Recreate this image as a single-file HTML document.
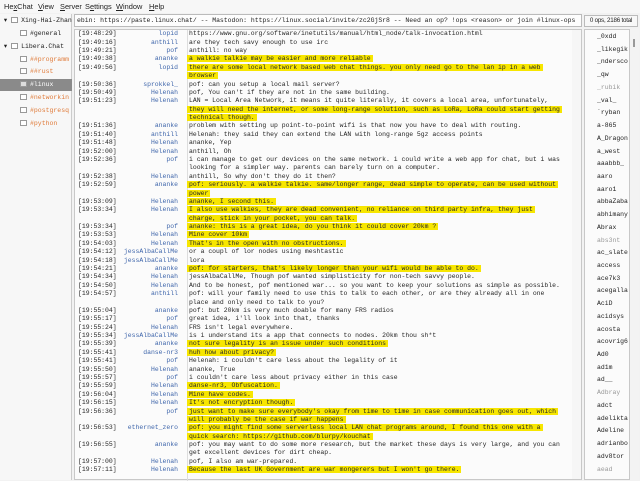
<!DOCTYPE html>
<html><head><meta charset="utf-8"><style>
*{margin:0;padding:0;box-sizing:border-box}
body{width:640px;height:480px;overflow:hidden;background:#f2f2f2;font-family:"Liberation Sans",sans-serif;position:relative;color:#222}
.menu{position:absolute;top:0;left:0;width:640px;height:13px;background:#f7f7f7;font-size:7.4px;line-height:13px}
.menu span{position:absolute;top:0}
.tree{position:absolute;left:0;top:14px;width:72px;height:466px;background:#f7f7f7;border-right:1px solid #ccc;font-family:"Liberation Mono",monospace;font-size:6.5px;color:#222}
.tree div{position:absolute;left:0;width:72px;height:12px;line-height:12px;white-space:nowrap;overflow:hidden}
.ic{display:inline-block;width:7px;height:6px;border:1px solid #999;background:#fff;vertical-align:-1px;margin-right:3px}
.or{color:#e07b3a}
.topic{position:absolute;left:74px;top:14px;width:508px;height:13px;border:1px solid #bbb;background:#fdfdfd;font-family:"Liberation Mono",monospace;font-size:6.45px;line-height:11px;padding-left:2px;white-space:nowrap;overflow:hidden;color:#222}
.ops{position:absolute;left:584px;top:15px;width:54px;height:12px;border:1px solid #bbb;background:#f8f8f8;font-size:6.2px;line-height:10px;text-align:center;white-space:nowrap;letter-spacing:-.2px}
.chat{position:absolute;left:74px;top:29px;width:508px;height:451px;background:#fbfbfb;border:1px solid #c8c8c8;font-family:"Liberation Mono",monospace;font-size:6.45px;color:#262626}
.sep{position:absolute;left:112px;top:0;width:1px;height:451px;background:#ddd}
.r{position:absolute;left:0;height:8.4px;line-height:8.4px;white-space:pre;width:500px}
.t{position:absolute;left:3px}
.n{position:absolute;right:397px;color:#3f66ab;text-align:right}
.x{position:absolute;left:114px}
.h{background:#f7e600;padding:0 2px;margin-left:-2px}
.sb{position:absolute;left:572px;top:30px;width:9px;height:449px;background:#f6f6f6}
.nl{position:absolute;left:584px;top:29px;width:46px;height:451px;background:#fbfbfb;border:1px solid #c8c8c8;font-family:"Liberation Mono",monospace;font-size:6.45px;color:#222}
.nl div{position:absolute;left:12px;white-space:nowrap;overflow:hidden;width:33px}
.g{color:#999}
.nsb{position:absolute;left:630px;top:29px;width:9px;height:451px;background:#f3f3f3}
</style></head><body>
<div class="menu"><span style="left:4px">He<u>x</u>Chat</span><span style="left:38px"><u>V</u>iew</span><span style="left:60px"><u>S</u>erver</span><span style="left:85px">S<u>e</u>ttings</span><span style="left:116px"><u>W</u>indow</span><span style="left:149px"><u>H</u>elp</span></div>
<div class="tree">
<div style="top:1px">&nbsp;▾ <span class="ic"></span>Xing-Hai-Zhan</div>
<div style="top:14px;padding-left:20px"><span class="ic"></span>#general</div>
<div style="top:27px">&nbsp;▾ <span class="ic"></span>Libera.Chat</div>
<div style="top:40px;padding-left:20px" class="or"><span class="ic"></span>##programm</div>
<div style="top:52px;padding-left:20px" class="or"><span class="ic"></span>##rust</div>
<div style="top:65px;padding-left:20px;background:#8a8a8a;color:#fff"><span class="ic" style="background:#ddd"></span>#linux</div>
<div style="top:78px;padding-left:20px" class="or"><span class="ic"></span>#networkin</div>
<div style="top:91px;padding-left:20px" class="or"><span class="ic"></span>#postgresq</div>
<div style="top:104px;padding-left:20px" class="or"><span class="ic"></span>#python</div>
</div>
<div class="topic">ebin: https://paste.linux.chat/ -- Mastodon: https://linux.social/invite/zc2GjSr8 -- Need an op? !ops &lt;reason&gt; or join #linux-ops</div>
<div class="ops">0 ops, 2186 total</div>
<div class="chat"><div class="sep"></div>
<div id="c"></div>
</div>
<div class="sb"></div>
<div class="nl" id="nl"></div>
<div class="nsb"><div style="position:absolute;left:3px;top:10px;width:2px;height:8px;background:#999"></div></div>
<script>
var L=[
["[19:48:29]","lopid","https://www.gnu.org/software/inetutils/manual/html_node/talk-invocation.html"],
["[19:49:16]","anthill","are they tech savy enough to use irc"],
["[19:49:21]","pof","anthill: no way"],
["[19:49:38]","ananke","a walkie talkie may be easier and more reliable",1],
["[19:49:56]","lopid","there are some local network based web chat things. you only need go to the lan ip in a web",1],
["","","browser",1],
["[19:50:36]","sprokkel_","pof: can you setup a local mail server?"],
["[19:50:49]","Helenah","pof, You can't if they are not in the same building."],
["[19:51:23]","Helenah","LAN = Local Area Network, it means it quite literally, it covers a local area, unfortunately,"],
["","","they will need the internet, or some long-range solution, such as LoRa, LoRa could start getting",1],
["","","technical though.",1],
["[19:51:36]","ananke","problem with setting up point-to-point wifi is that now you have to deal with routing."],
["[19:51:40]","anthill","Helenah: they said they can extend the LAN with long-range 5gz access points"],
["[19:51:48]","Helenah","ananke, Yep"],
["[19:52:00]","Helenah","anthill, Oh"],
["[19:52:36]","pof","i can manage to get our devices on the same network. i could write a web app for chat, but i was"],
["","","looking for a simpler way. parents can barely turn on a computer."],
["[19:52:38]","Helenah","anthill, So why don't they do it then?"],
["[19:52:59]","ananke","pof: seriously. a walkie talkie. same/longer range, dead simple to operate, can be used without",1],
["","","power",1],
["[19:53:09]","Helenah","ananke, I second this.",1],
["[19:53:34]","Helenah","I also use walkies, they are dead convenient, no reliance on third party infra, they just",1],
["","","charge, stick in your pocket, you can talk.",1],
["[19:53:34]","pof","ananke: this is a great idea, do you think it could cover 20km ?",1],
["[19:53:53]","Helenah","Mine cover 10km",1],
["[19:54:03]","Helenah","That's in the open with no obstructions.",1],
["[19:54:12]","jessAlbaCallMe","or a coupl of lor nodes using meshtastic"],
["[19:54:18]","jessAlbaCallMe","lora"],
["[19:54:21]","ananke","pof: for starters, that's likely longer than your wifi would be able to do.",1],
["[19:54:34]","Helenah","jessAlbaCallMe, Though pof wanted simplisticity for non-tech savvy people."],
["[19:54:50]","Helenah","And to be honest, pof mentioned war... so you want to keep your solutions as simple as possible."],
["[19:54:57]","anthill","pof: will your family need to use this to talk to each other, or are they already all in one"],
["","","place and only need to talk to you?"],
["[19:55:04]","ananke","pof: but 20km is very much doable for many FRS radios"],
["[19:55:17]","pof","great idea, i'll look into that, thanks"],
["[19:55:24]","Helenah","FRS isn't legal everywhere."],
["[19:55:34]","jessAlbaCallMe","is i understand its a app that connects to nodes. 20km thou sh*t"],
["[19:55:39]","ananke","not sure legality is an issue under such conditions",1],
["[19:55:41]","danse-nr3","huh how about privacy?",1],
["[19:55:41]","pof","Helenah: i couldn't care less about the legality of it"],
["[19:55:50]","Helenah","ananke, True"],
["[19:55:57]","pof","i couldn't care less about privacy either in this case"],
["[19:55:59]","Helenah","danse-nr3, Obfuscation.",1],
["[19:56:04]","Helenah","Mine have codes.",1],
["[19:56:15]","Helenah","It's not encryption though.",1],
["[19:56:36]","pof","just want to make sure everybody's okay from time to time in case communication goes out, which",1],
["","","will probably be the case if war happens",1],
["[19:56:53]","ethernet_zero","pof: you might find some serverless local LAN chat programs around, I found this one with a",1],
["","","quick search: https://github.com/blurpy/kouchat",1],
["[19:56:55]","ananke","pof: you may want to do some more research, but the market these days is very large, and you can"],
["","","get excellent devices for dirt cheap."],
["[19:57:00]","Helenah","pof, I also am war-prepared."],
["[19:57:11]","Helenah","Because the last UK Government are war mongerers but I won't go there.",1]];
var h="";function e(s){return s.replace(/&/g,"&amp;").replace(/</g,"&lt;")}
L.forEach(function(l,i){h+='<div class="r" style="top:'+(0.2+i*8.385).toFixed(2)+'px"><span class="t">'+l[0]+'</span><span class="n">'+e(l[1])+'</span><span class="x">'+(l[3]?'<span class="h">'+e(l[2])+'</span>':e(l[2]))+'</span></div>'});
document.getElementById("c").innerHTML=h;
var N=["_0xdd","_likegik","_ndersco","_qw","!_rubik","_val_","`ryban","a-865","A_Dragon","a_west","aaabbb_","aaro","aaro1","abbaZaba","abhimany","Abrax","!abs3nt","ac_slate","access","ace7k3","acegalla","AciD","acidsys","acosta","acovrig6","Ad0","ad1m","ad__","!Adbray","adct","adelikta","Adeline","adrianbo","adv8tor","!aead"];
var g="";N.forEach(function(n,i){var c=n[0]=="!";g+='<div'+(c?' class="g"':'')+' style="top:'+(3+i*12.72).toFixed(1)+'px">'+(c?n.slice(1):n)+'</div>'});
document.getElementById("nl").innerHTML=g;
</script>
</body></html>
